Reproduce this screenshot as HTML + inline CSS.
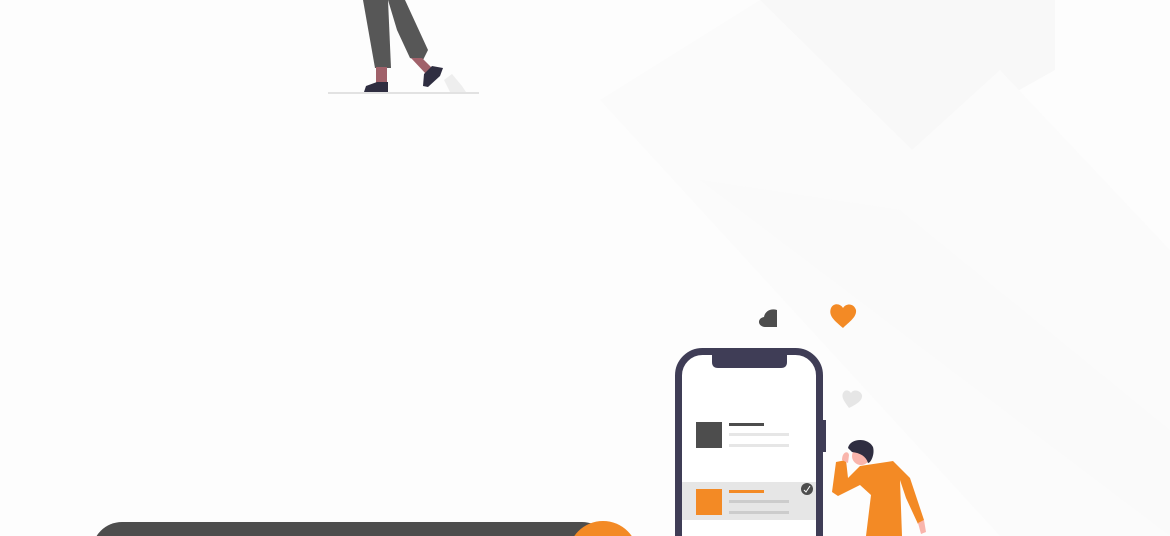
<!DOCTYPE html>
<html><head><meta charset="utf-8"><style>
html,body{margin:0;padding:0;background:#fdfdfd;width:1170px;height:536px;overflow:hidden}
svg{display:block}
</style></head><body>
<svg width="1170" height="536" viewBox="0 0 1170 536" xmlns="http://www.w3.org/2000/svg">
<rect width="1170" height="536" fill="#fdfdfd"/>
<polygon points="760,0 1055,0 1055,70 912,150" fill="#f8f8f8"/>
<polygon points="600,100 760,0 912,150 1000,70 1170,250 1170,536 1000,536" fill="#fbfbfb"/>
<polygon points="700,180 1170,536 1170,430 900,210" fill="#fafafa"/>
<!-- top figure -->
<line x1="328" y1="93" x2="479" y2="93" stroke="#e2e2e2" stroke-width="2"/>
<path d="M444,80 L452,74 L462,86 L466,92 L450,92 Z" fill="#eeeeee"/>
<path d="M363,0 L388,0 L391,68 L375,68 Z" fill="#575757"/>
<path d="M388,0 L405,0 L428,50 L422,62 L410,58 L397,30 Z" fill="#575757"/>
<rect x="376" y="67" width="11" height="16" fill="#a0616a"/>
<polygon points="411,58 422,58 432,68 426,74" fill="#a0616a"/>
<path d="M364,92 L366,86 L377,82 L388,82 L388,92 Z" fill="#2f2e41"/>
<path d="M424,74 L432,66 L443,68 L440,76 L428,87 L423,86 Z" fill="#2f2e41"/>
<!-- bottom bar -->
<rect x="92" y="522" width="520" height="60" rx="30" fill="#4d4d4d"/>
<circle cx="603" cy="556" r="35" fill="#f38a25"/>
<!-- hearts -->
<path d="M777,327 L766,327 C757,327 757,318 764,317 C765,311 771,308 777,310 Z" fill="#4d4d4d"/>
<path d="M843,328 C835,321 828,316 831,308 C834,302 841,304 843,308 C846,303 854,303 856,310 C857,317 849,322 843,328 Z" fill="#f38a25"/>
<path d="M849,408 C845,402 841,398 843,393 C845,389 849,390 851,393 C853,389 860,390 862,395 C863,401 855,405 849,408 Z" fill="#e6e6e6"/>
<!-- phone -->
<rect x="678.5" y="351.5" width="141" height="220" rx="24" fill="#ffffff" stroke="#3f3d56" stroke-width="7"/>
<path d="M712,352 L787,352 L787,362 Q787,368 781,368 L718,368 Q712,368 712,362 Z" fill="#3f3d56"/>
<rect x="822" y="420" width="4" height="32" fill="#3f3d56"/>
<rect x="696" y="422" width="26" height="26" fill="#4d4d4d"/>
<rect x="729" y="423" width="35" height="3" fill="#4d4d4d"/>
<rect x="729" y="433" width="60" height="3" fill="#e6e6e6"/>
<rect x="729" y="444" width="60" height="3" fill="#e6e6e6"/>
<rect x="682" y="482" width="134" height="38" fill="#e6e6e6"/>
<rect x="696" y="489" width="26" height="26" fill="#f38a25"/>
<rect x="729" y="490" width="35" height="3" fill="#f38a25"/>
<rect x="729" y="500" width="60" height="3" fill="#cccccc"/>
<rect x="729" y="511" width="60" height="3" fill="#cccccc"/>
<circle cx="807" cy="489" r="6" fill="#4d4d4d"/>
<path d="M804,490 L806,492 L810,486" stroke="#fff" stroke-width="1" fill="none"/>
<!-- person -->
<path d="M860,466 L893,461 L910,478 L924,520 L918,524 L906,498 L900,480 L902,536 L866,536 L871,495 L860,485 L838,496 L832,492 L836,462 L846,460 L848,478 Z" fill="#f38a25"/>
<path d="M918,523 L924,520 L926,532 L921,534 Z" fill="#f9b5ac"/>
<path d="M842,460 C842,452 848,450 849,455 L848,463 Z" fill="#f9b5ac"/>
<circle cx="861" cy="456" r="9" fill="#f9b5ac"/>
<path d="M848,448 C850,438 868,437 873,447 C875,454 871,463 868,463 C866,456 860,453 852,452 Z" fill="#2f2e41"/>
</svg>
</body></html>
